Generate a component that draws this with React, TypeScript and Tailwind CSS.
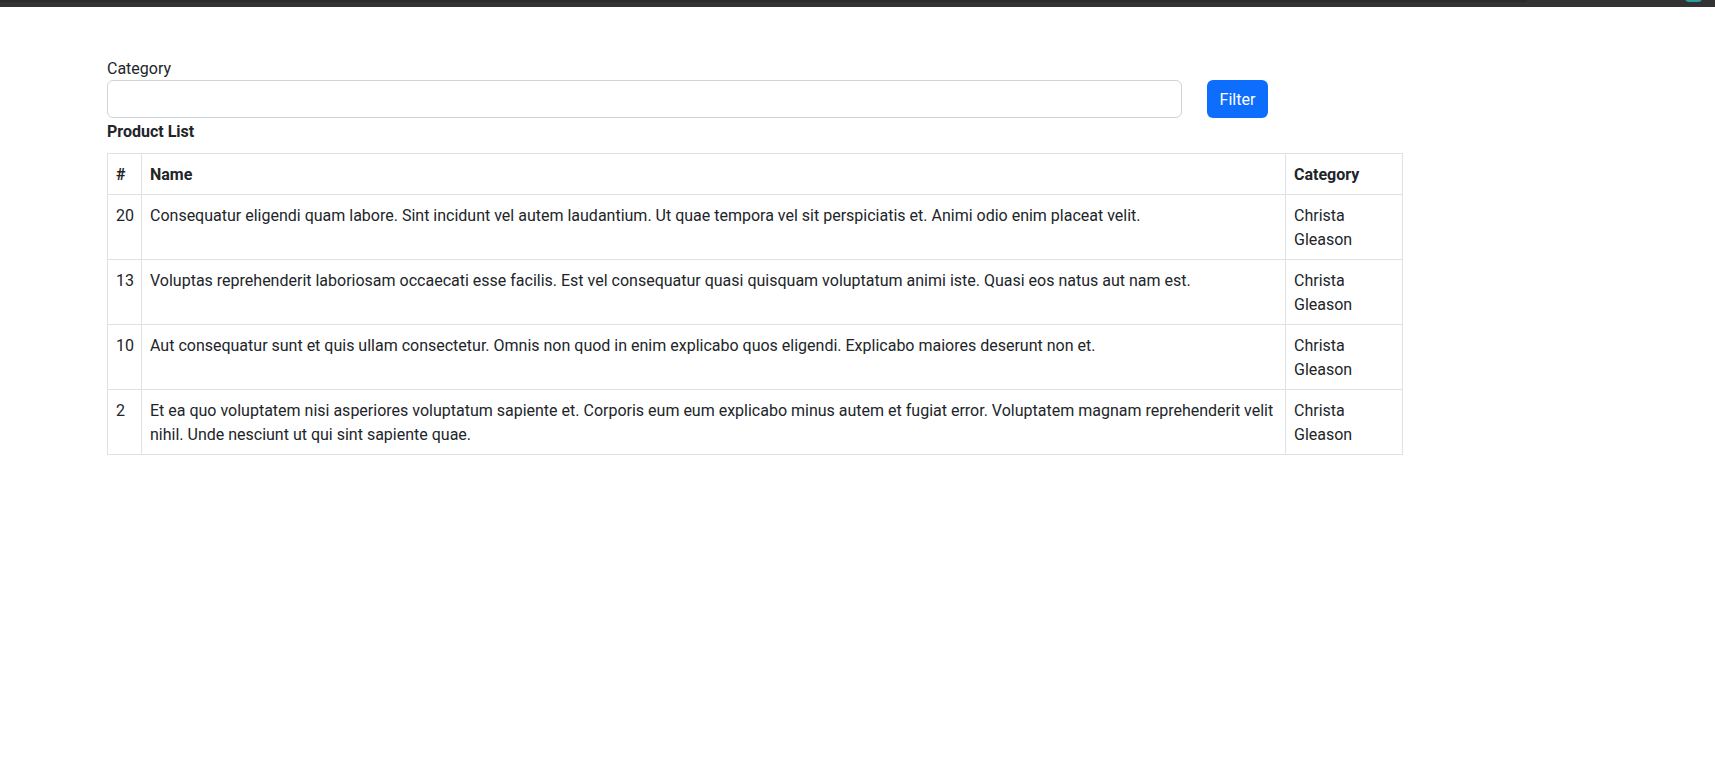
import React from 'react';

const products = [
  {
    id: 20,
    name: 'Consequatur eligendi quam labore. Sint incidunt vel autem laudantium. Ut quae tempora vel sit perspiciatis et. Animi odio enim placeat velit.',
    category: 'Christa Gleason',
  },
  {
    id: 13,
    name: 'Voluptas reprehenderit laboriosam occaecati esse facilis. Est vel consequatur quasi quisquam voluptatum animi iste. Quasi eos natus aut nam est.',
    category: 'Christa Gleason',
  },
  {
    id: 10,
    name: 'Aut consequatur sunt et quis ullam consectetur. Omnis non quod in enim explicabo quos eligendi. Explicabo maiores deserunt non et.',
    category: 'Christa Gleason',
  },
  {
    id: 2,
    name: 'Et ea quo voluptatem nisi asperiores voluptatum sapiente et. Corporis eum eum explicabo minus autem et fugiat error. Voluptatem magnam reprehenderit velit nihil. Unde nesciunt ut qui sint sapiente quae.',
    category: 'Christa Gleason',
  },
];

function App() {
  return (
    <div className="min-h-screen bg-white text-[16px] leading-6 text-[#212529] font-['Roboto',sans-serif]">
      <div className="relative h-[7px] bg-[#333333]">
        <div className="h-[2px] w-[1527px] bg-[#2b2b2b]" />
        <div className="absolute right-[13px] top-[-6px] h-[8px] w-[17px] rounded-full bg-[#2a9d9f]" />
      </div>

      <div className="pl-[107px] pt-[50px]">
        <label className="block">Category</label>
        <div className="-mt-[1px] flex items-center gap-[25px]">
          <input
            type="text"
            className="h-[38px] w-[1075px] rounded-[6px] border border-[#ced4da] px-3 outline-none"
          />
          <button className="h-[38px] w-[61px] rounded-[6px] bg-[#0d6efd] pt-[1px] text-white">Filter</button>
        </div>
        <div className="mt-[2px] font-bold">Product List</div>

        <table className="mt-[9px] w-[1295px] table-fixed border-collapse">
          <colgroup>
            <col className="w-[34px]" />
            <col className="w-[1144px]" />
            <col className="w-[117px]" />
          </colgroup>
          <thead>
            <tr>
              <th className="border border-[#dee2e6] px-2 pt-[9px] pb-[7px] text-left align-top font-bold">#</th>
              <th className="border border-[#dee2e6] px-2 pt-[9px] pb-[7px] text-left align-top font-bold">Name</th>
              <th className="border border-[#dee2e6] px-2 pt-[9px] pb-[7px] text-left align-top font-bold">Category</th>
            </tr>
          </thead>
          <tbody>
            {products.map((p) => (
              <tr key={p.id}>
                <td className="border border-[#dee2e6] px-2 pt-[9px] pb-[7px] align-top">{p.id}</td>
                <td className="border border-[#dee2e6] px-2 pt-[9px] pb-[7px] align-top">{p.name}</td>
                <td className="border border-[#dee2e6] px-2 pt-[9px] pb-[7px] align-top">{p.category}</td>
              </tr>
            ))}
          </tbody>
        </table>
      </div>
    </div>
  );
}

export default App;
